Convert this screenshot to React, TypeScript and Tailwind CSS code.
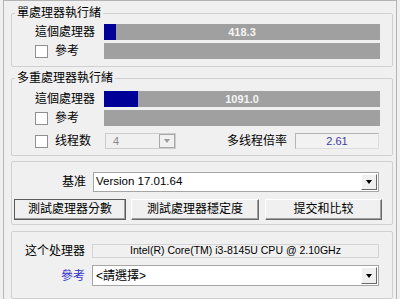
import type { ReactNode } from 'react';

const font = "font-['Liberation_Sans','Noto_Sans_CJK_TC',sans-serif]";

function Group({ title, className, children }: { title?: string; className: string; children: ReactNode }) {
  return (
    <div className={`relative border border-[#d0d0d0] rounded-[2px] ${className}`}>
      {title && (
        <span className="absolute left-[3px] top-[-9px] px-[2px] bg-[#f0f0f0] leading-[16px] text-[12px]">{title}</span>
      )}
      {children}
    </div>
  );
}

function Check() {
  return <span className="w-[13px] h-[13px] bg-white border border-[#8f8f8f] shrink-0" />;
}

function Bar({ fill, value }: { fill: number; value?: string }) {
  return (
    <div className="relative w-[276px] h-[16px] bg-[#a0a0a0] flex items-center justify-center">
      {fill > 0 && <div className="absolute left-0 top-0 bottom-0 bg-[#000099]" style={{ width: fill }} />}
      {value && <span className="relative text-[#f4f4f4] text-[11px] font-bold leading-none">{value}</span>}
    </div>
  );
}

function Arrow({ disabled }: { disabled?: boolean }) {
  return (
    <span
      className={`w-0 h-0 border-l-[3.5px] border-r-[3.5px] border-t-[4px] border-l-transparent border-r-transparent ${
        disabled ? 'border-t-[#9a9a9a]' : 'border-t-black'
      }`}
    />
  );
}

function DropButton() {
  return (
    <span className="w-[16px] self-stretch my-[1px] mr-[1px] flex items-center justify-center bg-[#f0f0f0] border border-t-white border-l-white border-r-[#696969] border-b-[#696969]">
      <Arrow />
    </span>
  );
}

function Combo({ text }: { text: string }) {
  return (
    <div className="w-[286px] h-[20px] bg-white border border-[#a5a5a5] flex items-stretch">
      <span className="flex-1 flex items-center pl-[2px] text-[11.5px]">{text}</span>
      <DropButton />
    </div>
  );
}

function WinButton({ label, w, focused }: { label: string; w: string; focused?: boolean }) {
  return (
    <button
      className={`${w} h-[21px] flex items-center justify-center text-[12px] bg-[#f0f0f0] ${
        focused ? 'border border-[#5a5a5a]' : 'border border-t-white border-l-white border-r-[#696969] border-b-[#696969]'
      } shadow-[inset_-1px_-1px_0_#a0a0a0]`}
    >
      {label}
    </button>
  );
}

export default function App() {
  return (
    <div className={`w-[400px] h-[299px] bg-[#f0f0f0] overflow-hidden text-black ${font}`}>
      <div className="ml-[3px] w-[394px] h-full border-l border-r border-t border-[#b4b4b4] pt-[12px] pl-[7px] flex flex-col">
        {/* single thread */}
        <Group title="單處理器執行緒" className="w-[382px] h-[56px] pt-[10px] flex flex-col gap-[3px]">
          <div className="flex items-center">
            <span className="w-[92px] pl-[23px] text-[12px] leading-none">這個處理器</span>
            <Bar fill={12} value="418.3" />
          </div>
          <div className="flex items-center">
            <div className="w-[92px] pl-[23px] flex items-center gap-[7px]">
              <Check />
              <span className="text-[12px] leading-none">參考</span>
            </div>
            <Bar fill={0} />
          </div>
        </Group>

        {/* multi thread */}
        <Group title="多重處理器執行緒" className="mt-[11px] w-[382px] h-[80px] pt-[12px] flex flex-col">
          <div className="flex items-center">
            <span className="w-[92px] pl-[23px] text-[12px] leading-none">這個處理器</span>
            <Bar fill={34} value="1091.0" />
          </div>
          <div className="flex items-center mt-[3px]">
            <div className="w-[92px] pl-[23px] flex items-center gap-[7px]">
              <Check />
              <span className="text-[12px] leading-none">參考</span>
            </div>
            <Bar fill={0} />
          </div>
          <div className="flex items-center mt-[7px] w-[367px]">
            <div className="w-[93px] pl-[23px] flex items-center gap-[7px]">
              <Check />
              <span className="text-[12px] leading-none">线程数</span>
            </div>
            <div className="w-[71px] h-[16px] border border-[#cccccc] bg-[#f0f0f0] flex items-stretch">
              <span className="flex-1 pl-[7px] text-[11px] text-[#8a8a8a] flex items-center">4</span>
              <span className="w-[16px] border border-[#a8a8a8] flex items-center justify-center">
                <Arrow disabled />
              </span>
            </div>
            <span className="ml-auto text-[12px] leading-none">多线程倍率</span>
            <div className="ml-[8px] w-[84px] h-[16px] border border-[#b4b4b4] border-b-[#dcdcdc] border-r-[#dcdcdc] bg-[#f2f2f2] flex items-center justify-center text-[11px] text-[#3c3ca0]">
              2.61
            </div>
          </div>
        </Group>

        {/* benchmark */}
        <Group className="mt-[5px] w-[382px] h-[67px] pt-[10px] flex flex-col">
          <div className="flex items-center">
            <span className="w-[81px] pr-[7px] text-right text-[12px] leading-none">基准</span>
            <Combo text="Version 17.01.64" />
          </div>
          <div className="flex items-center mt-[7px] pl-[2px] gap-[5px]">
            <WinButton label="測試處理器分數" w="w-[112px]" focused />
            <WinButton label="測試處理器穩定度" w="w-[128px]" />
            <span className="ml-[1px]">
              <WinButton label="提交和比较" w="w-[117px]" />
            </span>
          </div>
        </Group>

        {/* processor */}
        <Group className="mt-[6px] w-[382px] h-[70px] pt-[12px] flex flex-col">
          <div className="flex items-center">
            <span className="w-[80px] pr-[7px] text-right text-[12px] leading-none">这个处理器</span>
            <div className="w-[287px] h-[14px] border border-[#d4d4d4] bg-[#f0f0f0] flex items-center justify-center text-[10.5px]">
              Intel(R) Core(TM) i3-8145U CPU @ 2.10GHz
            </div>
          </div>
          <div className="flex items-center mt-[7px]">
            <span className="w-[80px] pr-[7px] text-right text-[12px] leading-none text-[#3232c8]">參考</span>
            <div className="w-[287px] h-[21px] bg-white border border-[#a5a5a5] flex items-stretch">
              <span className="flex-1 flex items-center pl-[3px] text-[12px]">&lt;請選擇&gt;</span>
              <DropButton />
            </div>
          </div>
        </Group>
      </div>
    </div>
  );
}
